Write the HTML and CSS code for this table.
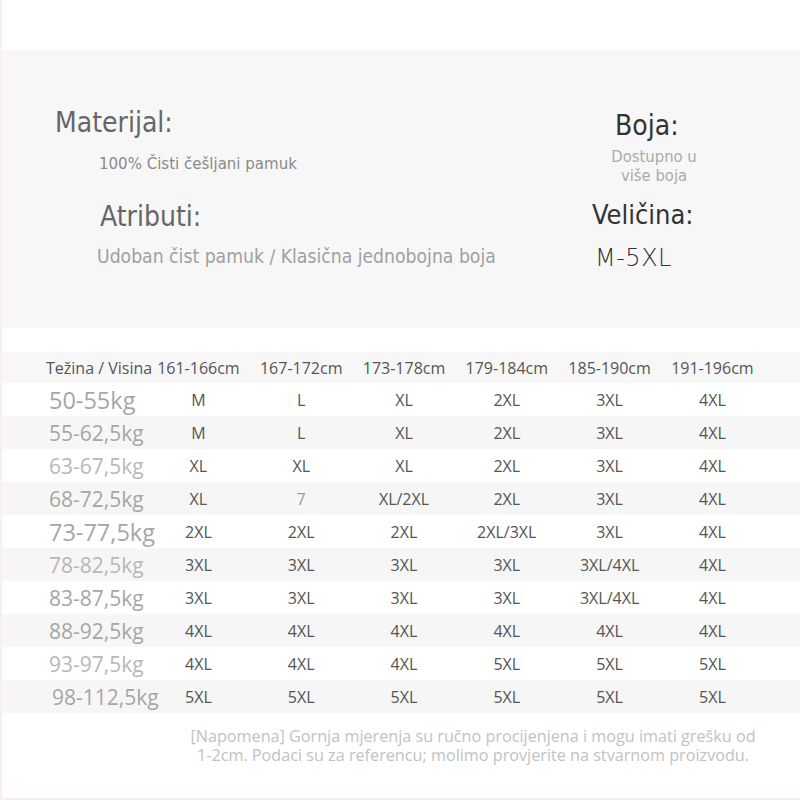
FILE: index.html
```html
<!DOCTYPE html>
<html lang="hr">
<head>
<meta charset="utf-8">
<title>Tablica veličina</title>
<link rel="stylesheet" href="styles.css">
</head>
<body>
<div class="page">
  <div class="top-space"></div>
  <section class="panel">
    <div class="col-left">
      <div class="title t-mat">Materijal:</div>
      <div class="desc d-mat">100% Čisti češljani pamuk</div>
      <div class="title t-atr">Atributi:</div>
      <div class="desc d-atr">Udoban čist pamuk / Klasična jednobojna boja</div>
    </div>
    <div class="col-right">
      <div class="title dark t-boja">Boja:</div>
      <div class="avail">Dostupno u<br>više boja</div>
      <div class="title dark t-vel">Veličina:</div>
      <div class="size-range">M-5XL</div>
    </div>
  </section>

  <div class="table">
    <div class="row head">
      <div class="cell first">Težina / Visina</div>
      <div class="cell">161-166cm</div>
      <div class="cell">167-172cm</div>
      <div class="cell">173-178cm</div>
      <div class="cell">179-184cm</div>
      <div class="cell">185-190cm</div>
      <div class="cell">191-196cm</div>
    </div>
    <div class="row">
      <div class="cell first w big">50-55kg</div>
      <div class="cell">M</div><div class="cell">L</div><div class="cell">XL</div><div class="cell">2XL</div><div class="cell">3XL</div><div class="cell">4XL</div>
    </div>
    <div class="row alt">
      <div class="cell first w">55-62,5kg</div>
      <div class="cell">M</div><div class="cell">L</div><div class="cell">XL</div><div class="cell">2XL</div><div class="cell">3XL</div><div class="cell">4XL</div>
    </div>
    <div class="row">
      <div class="cell first w light">63-67,5kg</div>
      <div class="cell">XL</div><div class="cell">XL</div><div class="cell">XL</div><div class="cell">2XL</div><div class="cell">3XL</div><div class="cell">4XL</div>
    </div>
    <div class="row alt">
      <div class="cell first w">68-72,5kg</div>
      <div class="cell">XL</div><div class="cell faint">7</div><div class="cell">XL/2XL</div><div class="cell">2XL</div><div class="cell">3XL</div><div class="cell">4XL</div>
    </div>
    <div class="row">
      <div class="cell first w big">73-77,5kg</div>
      <div class="cell">2XL</div><div class="cell">2XL</div><div class="cell">2XL</div><div class="cell">2XL/3XL</div><div class="cell">3XL</div><div class="cell">4XL</div>
    </div>
    <div class="row alt">
      <div class="cell first w light">78-82,5kg</div>
      <div class="cell">3XL</div><div class="cell">3XL</div><div class="cell">3XL</div><div class="cell">3XL</div><div class="cell">3XL/4XL</div><div class="cell">4XL</div>
    </div>
    <div class="row">
      <div class="cell first w">83-87,5kg</div>
      <div class="cell">3XL</div><div class="cell">3XL</div><div class="cell">3XL</div><div class="cell">3XL</div><div class="cell">3XL/4XL</div><div class="cell">4XL</div>
    </div>
    <div class="row alt">
      <div class="cell first w">88-92,5kg</div>
      <div class="cell">4XL</div><div class="cell">4XL</div><div class="cell">4XL</div><div class="cell">4XL</div><div class="cell">4XL</div><div class="cell">4XL</div>
    </div>
    <div class="row">
      <div class="cell first w light">93-97,5kg</div>
      <div class="cell">4XL</div><div class="cell">4XL</div><div class="cell">4XL</div><div class="cell">5XL</div><div class="cell">5XL</div><div class="cell">5XL</div>
    </div>
    <div class="row alt">
      <div class="cell first w last">98-112,5kg</div>
      <div class="cell">5XL</div><div class="cell">5XL</div><div class="cell">5XL</div><div class="cell">5XL</div><div class="cell">5XL</div><div class="cell">5XL</div>
    </div>
  </div>

  <p class="note">[Napomena] Gornja mjerenja su ručno procijenjena i mogu imati grešku od 1-2cm. Podaci su za referencu; molimo provjerite na stvarnom proizvodu.</p>
</div>
</body>
</html>
```

FILE: styles.css
```css
* { box-sizing: border-box; }

html, body {
  margin: 0;
  padding: 0;
  background: #ffffff;
}

.page {
  width: 800px;
  height: 800px;
  border-left: 2px solid #fbefeb;
  border-bottom: 2px solid #fbefeb;
  overflow: hidden;
  font-family: "Open Sans", "Noto Sans", sans-serif;
}

.top-space { height: 50px; }

/* ---------- info panel ---------- */
.panel {
  height: 278px;
  background: #f7f7f7;
  display: flex;
}

.col-left {
  width: 590px;
  padding: 53px 0 0 53px;
  display: flex;
  flex-direction: column;
  align-items: flex-start;
}

.col-right {
  width: 130px;
  padding-top: 56px;
  display: flex;
  flex-direction: column;
  align-items: flex-start;
}

.title {
  font-family: "DejaVu Sans", sans-serif;
  font-stretch: condensed;
  font-size: 28px;
  line-height: 40px;
  color: #666666;
  white-space: nowrap;
}

.title.dark { color: #333333; }

.desc {
  font-family: "DejaVu Sans", sans-serif;
  font-stretch: condensed;
  line-height: 40px;
  white-space: nowrap;
}

.d-mat { margin-left: 44px; font-size: 16.7px; color: #8a8a8a; }
.t-atr { margin-left: 45px; margin-top: 14px; }
.d-atr { margin-left: 42px; font-size: 19.2px; color: #a0a0a0; }

.t-boja { margin-left: 23px; }

.avail {
  width: 124px;
  margin-top: 1px;
  text-align: center;
  font-family: "DejaVu Sans", sans-serif;
  font-stretch: condensed;
  font-size: 16.5px;
  line-height: 19px;
  color: #ababab;
}

.t-vel { margin-top: 10px; font-size: 27px; }

.size-range {
  margin: 3px 0 0 3px;
  font-family: "DejaVu Sans", sans-serif;
  font-stretch: condensed;
  font-weight: 200;
  font-size: 24px;
  line-height: 40px;
  letter-spacing: 0.5px;
  color: #333333;
}

/* ---------- size table ---------- */
.table { margin-top: 24px; }

.row {
  display: grid;
  grid-template-columns: 145px repeat(6, 102.8px);
  height: 33px;
  align-items: center;
  background: #ffffff;
}

.row.alt { background: #f6f6f6; }

.row.head {
  height: 31px;
  background: #f7f7f7;
  font-size: 16px;
  color: #555555;
}

.cell {
  text-align: center;
  white-space: nowrap;
  font-size: 16px;
  color: #555555;
}

.cell.first {
  text-align: left;
  padding-left: 44px;
  overflow: visible;
}

.cell.w {
  font-size: 21px;
  color: #a6a6a6;
  padding-left: 47px;
}

.cell.w.big { font-size: 23.5px; }
.cell.w.light { color: #b8b8b8; }
.cell.w.last { padding-left: 50px; }

.cell.faint { color: #9a9a9a; }

/* ---------- note ---------- */
.note {
  margin: 14px 0 0 180px;
  width: 582px;
  text-align: center;
  font-size: 16.2px;
  line-height: 19px;
  color: #c2c2c2;
}
```
